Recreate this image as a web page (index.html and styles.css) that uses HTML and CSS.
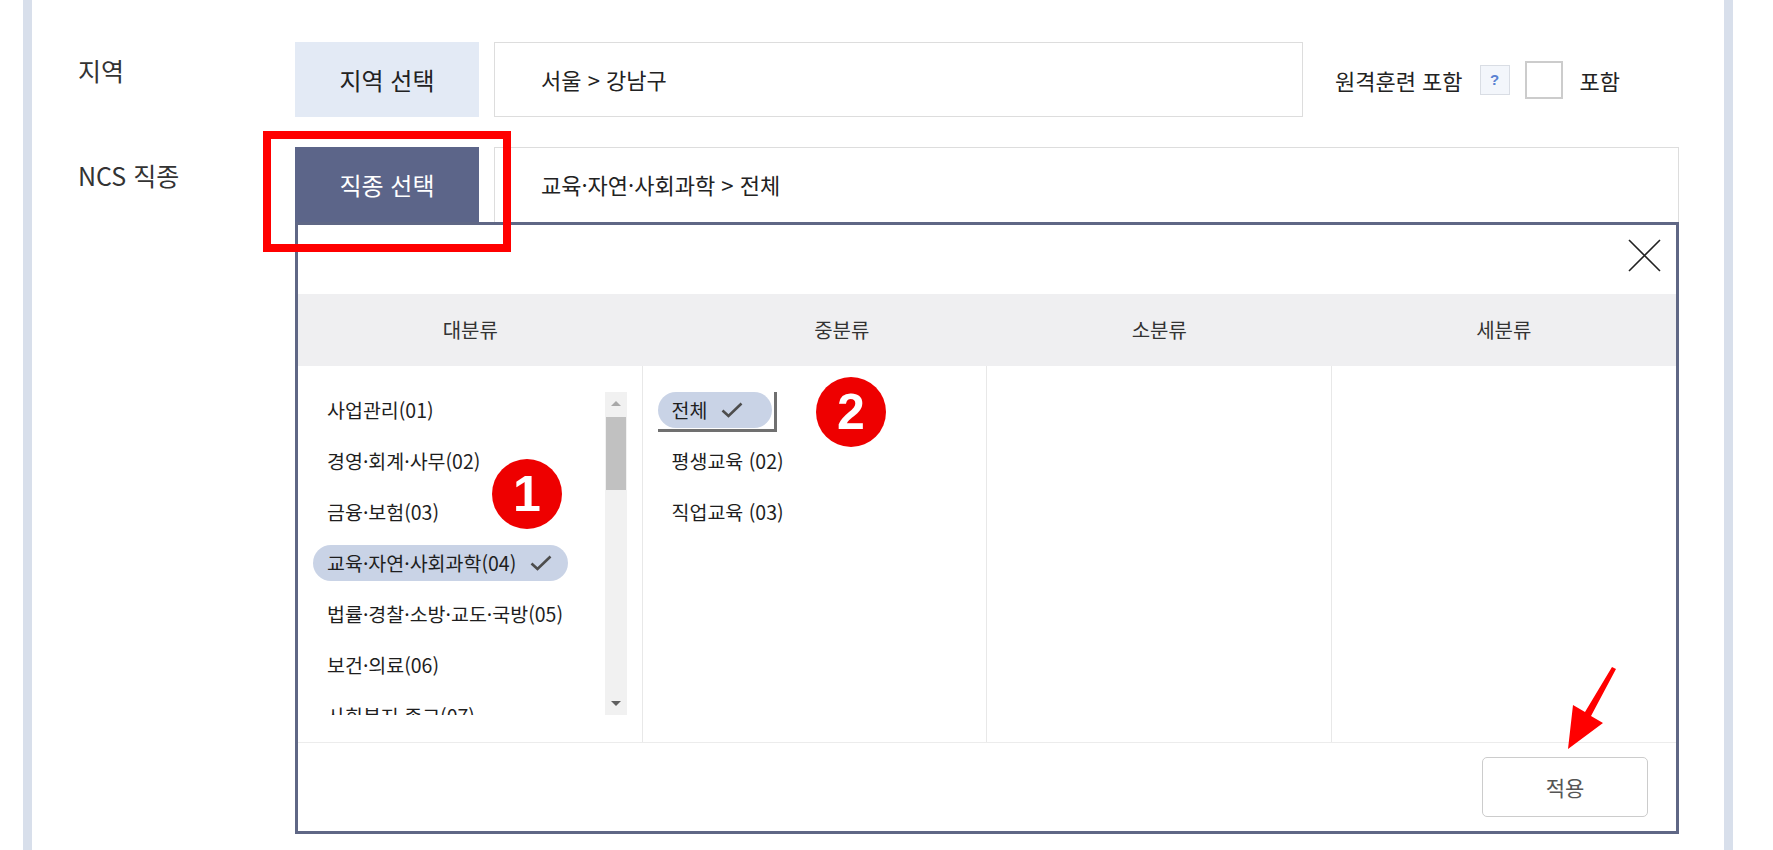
FILE: index.html
```html
<!DOCTYPE html>
<html lang="ko">
<head>
<meta charset="utf-8">
<title>NCS 직종 선택</title>
<link rel="stylesheet" href="styles.css">
</head>
<body>
<div class="page">
  <div class="frame">
    <div class="row">
      <div class="label">지역</div>
      <div class="controls">
        <button class="btn-select btn-light">지역 선택</button>
        <div class="field field-region">서울 &gt; 강남구</div>
        <div class="remote">
          <span class="remote-text">원격훈련 포함</span>
          <span class="help">?</span>
          <span class="checkbox"></span>
          <span class="remote-label">포함</span>
        </div>
      </div>
    </div>
    <div class="row row-ncs">
      <div class="label">NCS 직종</div>
      <div class="ncs-block">
        <div class="tabbar">
          <button class="btn-select btn-dark">직종 선택</button>
          <div class="field field-ncs">교육·자연·사회과학 &gt; 전체</div>
        </div>
        <div class="popup">
          <div class="popup-top">
            <svg class="close" width="33" height="33" viewBox="0 0 33 33"><path d="M1 1 L32 32 M32 1 L1 32" stroke="#222" stroke-width="1.6" fill="none"/></svg>
          </div>
          <div class="grid-head">
            <div>대분류</div><div class="head-mid">중분류</div><div>소분류</div><div>세분류</div>
          </div>
          <div class="grid-body">
            <div class="col col-first">
              <div class="scrollbox">
                <ul class="list">
                  <li class="item">사업관리(01)</li>
                  <li class="item">경영·회계·사무(02)</li>
                  <li class="item">금융·보험(03)</li>
                  <li class="item item-on">교육·자연·사회과학(04)<svg class="check" width="22" height="16" viewBox="0 0 22 16"><path d="M1.5 8.5 L7.5 14 L20.5 1.5" stroke="#4d4d4d" stroke-width="2.6" fill="none"/></svg></li>
                  <li class="item">법률·경찰·소방·교도·국방(05)</li>
                  <li class="item">보건·의료(06)</li>
                  <li class="item">사회복지·종교(07)</li>
                </ul>
                <div class="scrollbar">
                  <span class="arrow arrow-up"></span>
                  <span class="thumb"></span>
                  <span class="arrow arrow-down"></span>
                </div>
              </div>
            </div>
            <div class="col">
              <ul class="list">
                <li class="item item-on item-all">전체<svg class="check" width="22" height="16" viewBox="0 0 22 16"><path d="M1.5 8.5 L7.5 14 L20.5 1.5" stroke="#4d4d4d" stroke-width="2.6" fill="none"/></svg></li>
                <li class="item">평생교육 (02)</li>
                <li class="item">직업교육 (03)</li>
              </ul>
            </div>
            <div class="col"></div>
            <div class="col col-last"></div>
          </div>
          <div class="popup-foot">
            <button class="apply">적용</button>
          </div>
        </div>
      </div>
    </div>
  </div>

  <div class="mark-box"></div>
  <div class="badge badge-1">1</div>
  <div class="badge badge-2">2</div>
  <svg class="arrow-mark" width="1773" height="850" viewBox="0 0 1773 850">
    <polygon points="1568,749 1573,705 1585,712 1612,667 1616,669 1591,716 1603,723" fill="#ff0000"/>
  </svg>
</div>
</body>
</html>
```

FILE: styles.css
```css
* { box-sizing: border-box; }
html, body { margin: 0; padding: 0; background: #ffffff; }
body {
  font-family: "Noto Sans CJK KR", "Noto Sans", sans-serif;
  color: #222;
}
.page {
  position: relative;
  width: 1773px;
  height: 850px;
  overflow: hidden;
}
.frame {
  margin-left: 23px;
  width: 1710px;
  height: 850px;
  border-left: 9px solid #d8dfeb;
  border-right: 9px solid #d8dfeb;
  padding: 42px 0 0 46px;
}
.row {
  display: flex;
  align-items: flex-start;
}
.row-ncs { margin-top: 30px; }
.label {
  width: 217px;
  flex: none;
  font-size: 25px;
  line-height: 34px;
  padding-top: 11px;
  color: #333;
}
.controls {
  display: flex;
  align-items: center;
}
.btn-select {
  width: 184px;
  height: 75px;
  border: 0;
  margin: 0;
  padding: 0;
  font-family: inherit;
  font-size: 24px;
  flex: none;
}
.btn-light { background: #e3eaf5; color: #222; }
.btn-dark { background: #5c6589; color: #fff; }
.field {
  height: 75px;
  border: 1px solid #dddddd;
  margin-left: 15px;
  padding-left: 46px;
  font-size: 22px;
  line-height: 72px;
  color: #222;
}
.field-region { width: 809px; }
.field-ncs { flex: 1; border-bottom: 0; }
.remote {
  display: flex;
  align-items: center;
  margin-left: 32px;
  font-size: 22px;
  color: #222;
}
.help {
  width: 30px;
  height: 30px;
  margin-left: 17px;
  border: 1px solid #d9dde4;
  background: #f3f6fb;
  color: #5a82d2;
  font-family: "Liberation Sans", sans-serif;
  font-weight: bold;
  font-size: 15px;
  line-height: 28px;
  text-align: center;
}
.checkbox {
  width: 38px;
  height: 38px;
  margin-left: 15px;
  border: 2px solid #cccccc;
  background: #fff;
}
.remote-label { margin-left: 17px; }

.ncs-block { width: 1384px; flex: none; }
.tabbar { display: flex; }
.popup {
  height: 612px;
  border: 3px solid #5f6785;
  background: #fff;
  display: flex;
  flex-direction: column;
}
.popup-top {
  height: 69px;
  display: flex;
  justify-content: flex-end;
  padding: 14px 15px 0 0;
}
.grid-head {
  height: 72px;
  background: #efeff1;
  display: grid;
  grid-template-columns: repeat(4, 1fr);
  font-size: 20px;
  line-height: 72px;
  text-align: center;
  color: #333;
}
.head-mid { padding-left: 54px; }
.grid-body {
  height: 376px;
  display: grid;
  grid-template-columns: repeat(4, 1fr);
}
.col {
  border-right: 1px solid #e8e8e8;
  padding: 26px 15px 0 15px;
  overflow: hidden;
}
.col-last { border-right: 0; }
.scrollbox {
  display: flex;
  height: 323px;
}
.scrollbox .list { flex: 1; overflow: hidden; }
.list {
  list-style: none;
  margin: 0;
  padding: 0;
  display: flex;
  flex-direction: column;
  align-items: flex-start;
}
.item {
  position: relative;
  flex: none;
  height: 36px;
  margin-bottom: 15px;
  padding: 0 14px;
  font-size: 19.5px;
  line-height: 36px;
  color: #1e1e1e;
  white-space: nowrap;
  display: flex;
  align-items: center;
}
.item-on {
  background: #c9d3e6;
  border-radius: 18px;
  padding-right: 16px;
}
.item-all { padding-right: 29px; }
.item-all::after {
  content: "";
  position: absolute;
  left: 0;
  top: 0;
  right: -5px;
  bottom: -4px;
  border-right: 3px solid #707070;
  border-bottom: 3px solid #707070;
}
.check { margin-left: 14px; flex: none; }
.scrollbar {
  width: 22px;
  flex: none;
  background: #f1f1f1;
  display: flex;
  flex-direction: column;
  align-items: center;
}
.arrow { width: 0; height: 0; border-left: 5px solid transparent; border-right: 5px solid transparent; }
.arrow-up { border-bottom: 5px solid #a8a8a8; margin-top: 9px; }
.arrow-down { border-top: 5px solid #606060; margin-top: auto; margin-bottom: 9px; }
.thumb {
  width: 20px;
  height: 73px;
  background: #c1c1c1;
  margin-top: 11px;
}
.popup-foot {
  height: 89px;
  border-top: 1px solid #ececec;
  display: flex;
  justify-content: flex-end;
  padding: 14px 28px 0 0;
}
.apply {
  width: 166px;
  height: 60px;
  border: 1px solid #cccccc;
  border-radius: 5px;
  background: #fff;
  font-family: inherit;
  font-size: 21px;
  color: #555;
}

.mark-box {
  position: absolute;
  left: 263px;
  top: 131px;
  width: 248px;
  height: 121px;
  border: 8px solid #ff0000;
}
.badge {
  position: absolute;
  width: 70px;
  height: 70px;
  border-radius: 50%;
  background: #ee0000;
  color: #fff;
  font-family: "Liberation Sans", sans-serif;
  font-weight: bold;
  font-size: 50px;
  line-height: 70px;
  text-align: center;
}
.badge-1 { left: 492px; top: 459px; }
.badge-2 { left: 816px; top: 377px; }
.arrow-mark {
  position: absolute;
  left: 0;
  top: 0;
  pointer-events: none;
}
```
